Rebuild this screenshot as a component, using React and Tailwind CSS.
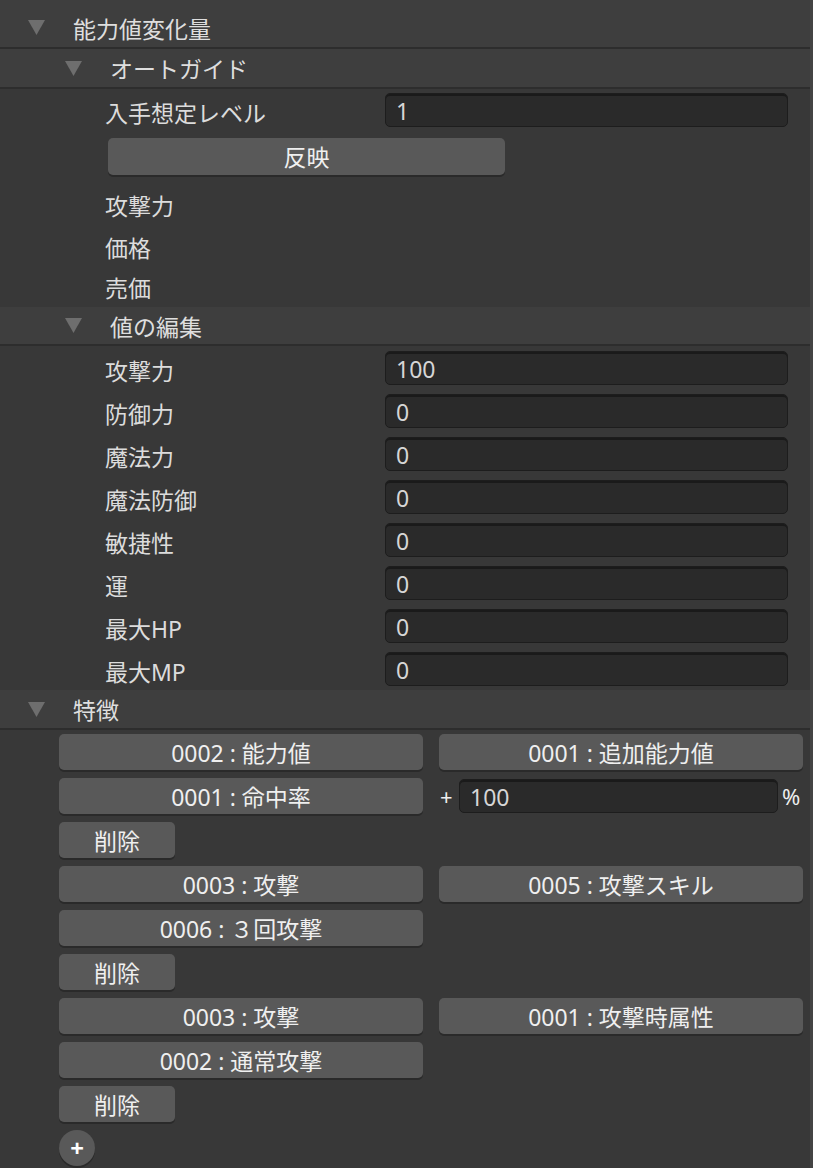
import React from "react";

const font = { fontFamily: '"Noto Sans", "Noto Sans CJK JP", sans-serif' };

function Tri({ className }) {
  return (
    <svg width="17" height="15" viewBox="0 0 17 15" className={className}>
      <path d="M0 0H17L8.5 15Z" fill="#6e6e6e" />
    </svg>
  );
}

function Header({ level, children, h = "h-[49px]" }) {
  return (
    <div className={`flex ${h} items-center bg-[#3e3e3e] border-b-2 border-[#2d2d2d]`}>
      <Tri className={level === 1 ? "ml-[28px]" : "ml-[65px]"} />
      <span className="ml-[28px] pt-[3px] text-[23px] text-[#dedede] leading-none">{children}</span>
    </div>
  );
}

function Input({ value, className = "" }) {
  return (
    <div
      className={`flex h-[34px] items-center rounded-[5px] border border-[#1d1d1d] bg-[#2a2a2a] pl-[10px] pt-[2px] text-[23px] leading-none text-[#d6d6d6] shadow-[inset_0_2px_0_#1a1a1a] ${className}`}
    >
      {value}
    </div>
  );
}

function Btn({ children, className = "" }) {
  return (
    <div
      className={`flex h-[36px] items-center justify-center rounded-[5px] bg-[#595959] pt-[2px] text-[23px] leading-none text-[#efefef] shadow-[0_2px_0_#2a2a2a] ${className}`}
    >
      {children}
    </div>
  );
}

function ValueRow({ label, value }) {
  return (
    <div className="flex h-[34px] items-center">
      <span className="w-[385px] shrink-0 pl-[105px] pt-[6px] text-[23px] leading-none text-[#dcdcdc]">{label}</span>
      <Input value={value} className="w-[403px]" />
    </div>
  );
}

function FeatureGroup({ a, b, c, extra }) {
  return (
    <div className="flex flex-col gap-[8px]">
      <div className="grid grid-cols-[364px_364px] gap-x-[16px]">
        <Btn>{a}</Btn>
        <Btn>{b}</Btn>
      </div>
      <div className="grid grid-cols-[364px_364px] gap-x-[16px]">
        <Btn>{c}</Btn>
        {extra ? (
          <div className="flex h-[36px] items-center">
            <span className="w-[20px] pl-[1px] text-[22px] leading-none text-[#eeeeee]">+</span>
            <Input value="100" className="w-[319px]" />
            <span className="ml-[4px] text-[22px] leading-none text-[#eeeeee]">%</span>
          </div>
        ) : (
          <div />
        )}
      </div>
      <Btn className="w-[116px]">削除</Btn>
    </div>
  );
}

export default function App() {
  return (
    <div style={font} className="min-h-[1168px] w-[813px] bg-[#383838] border-r-[3px] border-[#444444] overflow-hidden">
      <div className="flex h-[49px] items-center bg-[#3e3e3e] border-b-2 border-[#2d2d2d] pt-[8px]">
        <Tri className="ml-[28px]" />
        <span className="ml-[28px] pt-[3px] text-[23px] text-[#dedede] leading-none">能力値変化量</span>
      </div>
      <Header level={2} h="h-[40px]">オートガイド</Header>
      <div className="flex flex-col pt-[4px]">
        <div className="flex h-[34px] items-center">
          <span className="w-[385px] shrink-0 pl-[105px] pt-[6px] text-[23px] leading-none text-[#dcdcdc]">入手想定レベル</span>
          <Input value="1" className="w-[403px]" />
        </div>
        <div className="mt-[11px] pl-[108px]">
          <Btn className="w-[397px] h-[37px]">反映</Btn>
        </div>
        <div className="mt-[9px] flex flex-col">
          {["攻撃力", "価格", "売価"].map((l, i) => (
            <div key={l} className={`flex ${i === 2 ? "h-[39px]" : "h-[42px]"} items-center pl-[105px] pt-[2px] text-[23px] leading-none text-[#dcdcdc]`}>
              {l}
            </div>
          ))}
        </div>
      </div>
      <Header level={2} h="h-[39px]">値の編集</Header>
      <div className="flex flex-col gap-[9px] pt-[5px] pb-[4px]">
        <ValueRow label="攻撃力" value="100" />
        <ValueRow label="防御力" value="0" />
        <ValueRow label="魔法力" value="0" />
        <ValueRow label="魔法防御" value="0" />
        <ValueRow label="敏捷性" value="0" />
        <ValueRow label="運" value="0" />
        <ValueRow label="最大HP" value="0" />
        <ValueRow label="最大MP" value="0" />
      </div>
      <Header level={1} h="h-[40px]">特徴</Header>
      <div className="flex flex-col gap-[8px] pl-[59px] pt-[4px]">
        <FeatureGroup a="0002 : 能力値" b="0001 : 追加能力値" c="0001 : 命中率" extra />
        <FeatureGroup a="0003 : 攻撃" b="0005 : 攻撃スキル" c="0006 :  ３回攻撃" />
        <FeatureGroup a="0003 : 攻撃" b="0001 : 攻撃時属性" c="0002 : 通常攻撃" />
        <div className="flex h-[36px] w-[36px] items-center justify-center rounded-full bg-[#595959] text-[24px] font-bold leading-none text-white shadow-[0_2px_0_#2a2a2a]">
          +
        </div>
      </div>
    </div>
  );
}
